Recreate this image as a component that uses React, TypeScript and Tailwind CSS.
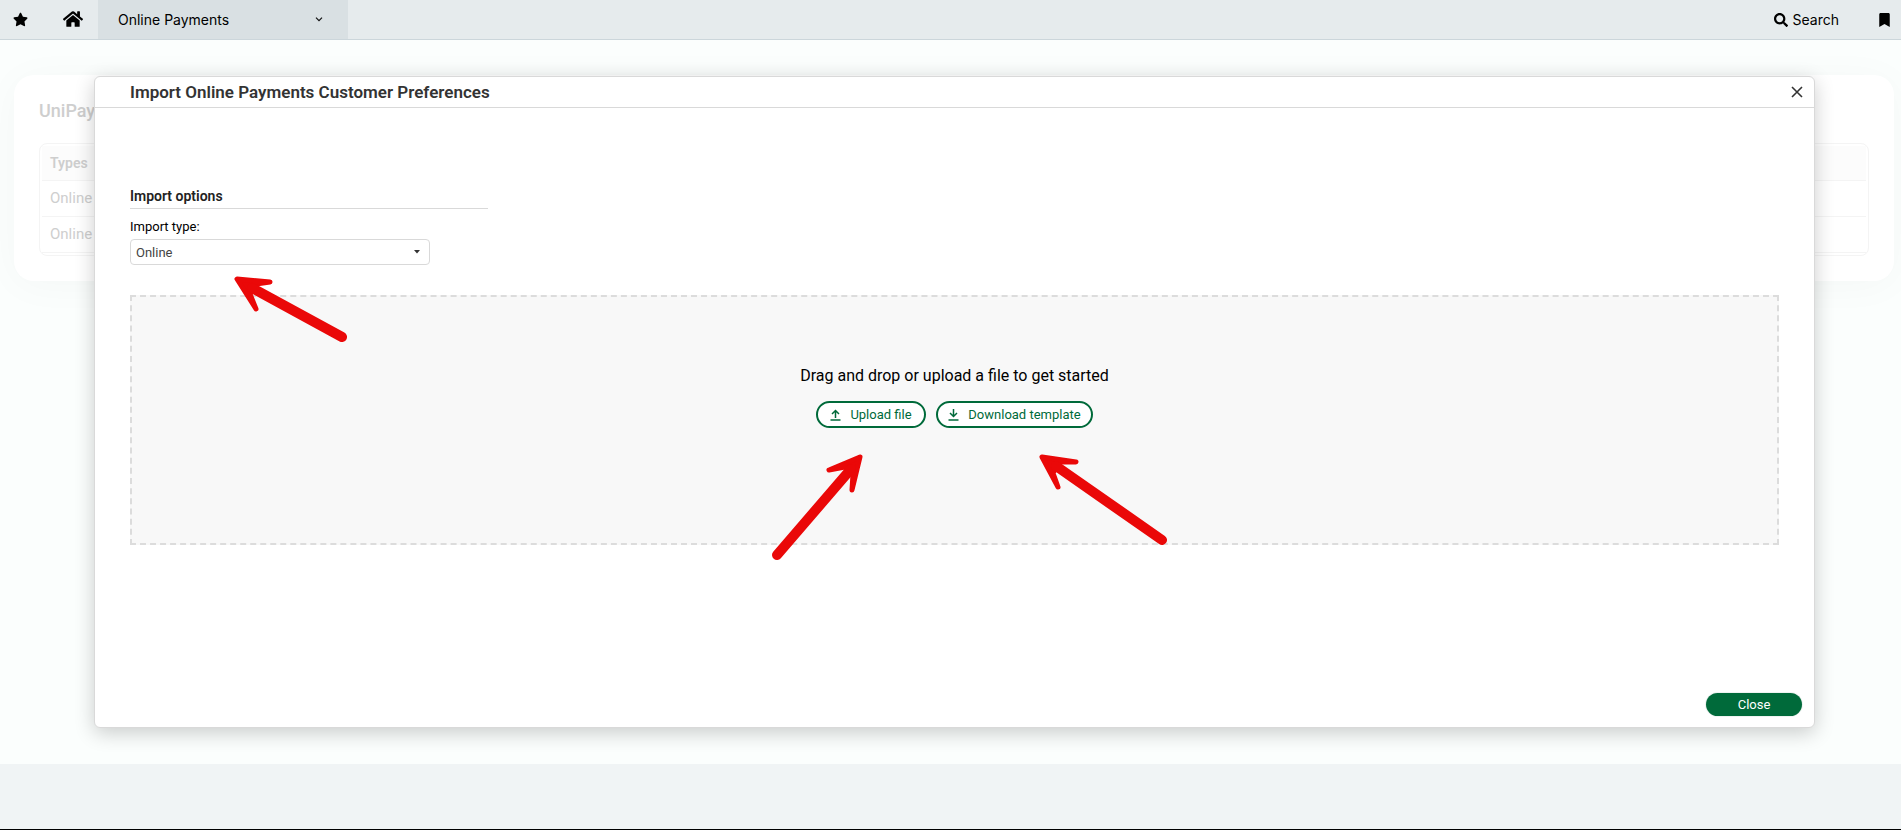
import { useState } from 'react';
import { FaBookmark, FaHome, FaSearch, FaStar } from 'react-icons/fa';

const PREFERENCE_TYPES = ['Online', 'Online'];

type Point = [number, number];

interface ArrowProps {
  className: string;
  width: number;
  height: number;
  head: Point[];
  shaft: Point[];
}

function Arrow({ className, width, height, head, shaft }: ArrowProps) {
  return (
    <svg
      aria-hidden="true"
      className={`absolute pointer-events-none overflow-visible ${className}`}
      width={width}
      height={height}
      fill="#ea0808"
      stroke="#ea0808"
      strokeLinecap="round"
      strokeLinejoin="round"
    >
      <polygon points={head.join(' ')} strokeWidth="5" />
      <polyline points={shaft.join(' ')} fill="none" strokeWidth="10" />
    </svg>
  );
}

function TopBar() {
  return (
    <header className="flex items-center h-10 bg-[#e6ebed] border-b border-[#ccd6db] text-sm text-black font-['Inter',sans-serif]">
      <button type="button" aria-label="Favourites" className="pl-[13px]">
        <FaStar className="size-[15px]" />
      </button>
      <a href="#home" aria-label="Home" className="ml-[35px] mr-[15px] pb-0.5">
        <FaHome className="size-5" />
      </a>
      <button
        type="button"
        className="flex items-center justify-between self-stretch w-[250px] pl-5 pr-[25px] bg-[#d9e0e3]"
      >
        Online Payments
        <svg width="8" height="5" viewBox="0 0 8 5" fill="none" stroke="#111" strokeWidth="1.2">
          <path d="M1 0.7 L4 3.7 L7 0.7" />
        </svg>
      </button>
      <div className="flex items-center gap-10 ml-auto pr-[11px]">
        <button type="button" className="flex items-center gap-[5px]">
          <FaSearch className="size-[14px]" />
          Search
        </button>
        <button type="button" aria-label="Bookmarks">
          <FaBookmark className="w-[11px] h-[14px]" />
        </button>
      </div>
    </header>
  );
}

function PreferencesCard() {
  return (
    <section className="ml-[14px] mr-[7px] pt-6 px-[25px] pb-[25px] bg-white rounded-[20px] shadow-[0_4px_40px_rgba(0,0,0,0.03)] text-[#cecece]">
      <h1 className="text-lg leading-6 font-medium">UniPay</h1>
      <div className="mt-5 p-0.5 border border-[#f4f4f4] rounded-lg">
        <table className="w-full text-left">
          <thead>
            <tr className="bg-[#fcfcfc] border-b border-[#f4f4f4]">
              <th className="pl-2 text-sm leading-[34px] font-semibold">Types</th>
            </tr>
          </thead>
          <tbody>
            {PREFERENCE_TYPES.map((type, i) => (
              <tr key={i} className="border-b border-[#f4f4f4]">
                <td className="pl-2 text-[15px] leading-[35px]">{type}</td>
              </tr>
            ))}
          </tbody>
        </table>
      </div>
    </section>
  );
}

function ImportDialog() {
  const [importType, setImportType] = useState('Online');

  return (
    <div
      role="dialog"
      aria-labelledby="dialog-title"
      className="absolute top-[76px] left-[94px] right-[86px] bg-white border border-[#d9d9d9] rounded-md shadow-[0_5px_20px_rgba(0,0,0,0.2)]"
    >
      <div className="flex items-center justify-between h-[31px] pl-[35px] pr-[11px] border-b border-[#d9d9d9]">
        <h2 id="dialog-title" className="text-[17px] leading-6 font-semibold text-[#333]">
          Import Online Payments Customer Preferences
        </h2>
        <button type="button" aria-label="Dismiss">
          <svg width="12" height="12" viewBox="0 0 12 12" stroke="#333" strokeWidth="1.6">
            <path d="M1 1 L11 11 M11 1 L1 11" />
          </svg>
        </button>
      </div>

      <div className="px-[35px] pt-[79px]">
        <h3 className="w-[358px] pb-[3px] text-sm leading-[18px] font-semibold text-[#222] border-b border-[#d9d9d9]">
          Import options
        </h3>
        <div className="relative w-[300px] mt-[9px] text-[13px]">
          <label htmlFor="import-type" className="block leading-[18px] text-black">
            Import type:
          </label>
          <select
            id="import-type"
            value={importType}
            onChange={(e) => setImportType(e.target.value)}
            className="block w-full h-[26px] mt-[3px] pt-px pl-[5px] bg-white border border-[#d9d9d9] rounded appearance-none text-[#444]"
          >
            <option>Online</option>
          </select>
          <svg
            className="absolute right-[10px] bottom-[11px] pointer-events-none"
            width="6"
            height="4"
            fill="#333"
          >
            <path d="M0 0 H6 L3 3.5 Z" />
          </svg>
          <Arrow
            className="left-[106px] top-[60px]"
            width={107}
            height={60}
            head={[[1, 1], [34, 4], [20, 6], [14, 16], [20, 31]]}
            shaft={[[16, 10], [106, 59]]}
          />
        </div>

        <div className="flex flex-col items-center h-[250px] mt-[30px] pt-[67px] bg-[#f8f8f8] border-2 border-dashed border-[#dcdcdc]">
          <p className="text-base leading-6 text-black">Drag and drop or upload a file to get started</p>
          <div className="flex gap-[10px] mt-[13px] text-[13px] text-[#006a3a]">
            <div className="relative">
              <button
                type="button"
                className="flex items-center justify-center gap-[9px] w-[110px] h-[27px] bg-white border-2 border-[#006a3a] rounded-full"
              >
                <svg width="11" height="12" viewBox="0 0 11 12" fill="none" stroke="#006a3a" strokeWidth="1.5">
                  <path d="M5.5 9 V1.5 M2 5 L5.5 1.5 L9 5 M0.5 11 H10.5" />
                </svg>
                Upload file
              </button>
              <Arrow
                className="right-[65px] top-[55px]"
                width={85}
                height={100}
                head={[[84, 1], [53, 14], [69, 11], [77, 18], [76, 34]]}
                shaft={[[75, 13], [1, 99]]}
              />
            </div>
            <div className="relative">
              <button
                type="button"
                className="flex items-center justify-center gap-[9px] w-[157px] h-[27px] bg-white border-2 border-[#006a3a] rounded-full"
              >
                <svg width="11" height="12" viewBox="0 0 11 12" fill="none" stroke="#006a3a" strokeWidth="1.5">
                  <path d="M5.5 0 V7.5 M2 4 L5.5 7.5 L9 4 M0.5 11 H10.5" />
                </svg>
                Download template
              </button>
              <Arrow
                className="left-[105px] top-[55px]"
                width={122}
                height={85}
                head={[[1, 1], [35, 6], [19, 6], [12, 17], [17, 31]]}
                shaft={[[15, 10], [121, 84]]}
              />
            </div>
          </div>
        </div>
      </div>

      <div className="flex justify-end pt-[148px] pr-3 pb-[11px]">
        <button
          type="button"
          className="w-24 h-[23px] bg-[#006a3a] rounded-full ring-1 ring-[#eef3f1] text-[13px] text-white"
        >
          Close
        </button>
      </div>
    </div>
  );
}

export default function App() {
  return (
    <div className="relative flex flex-col min-h-screen bg-[#f0f4f5] border-b border-black font-['Roboto',sans-serif]">
      <TopBar />
      <main className="pt-[35px] pb-[483px] bg-[#fbfefd]">
        <PreferencesCard />
      </main>
      <ImportDialog />
    </div>
  );
}
